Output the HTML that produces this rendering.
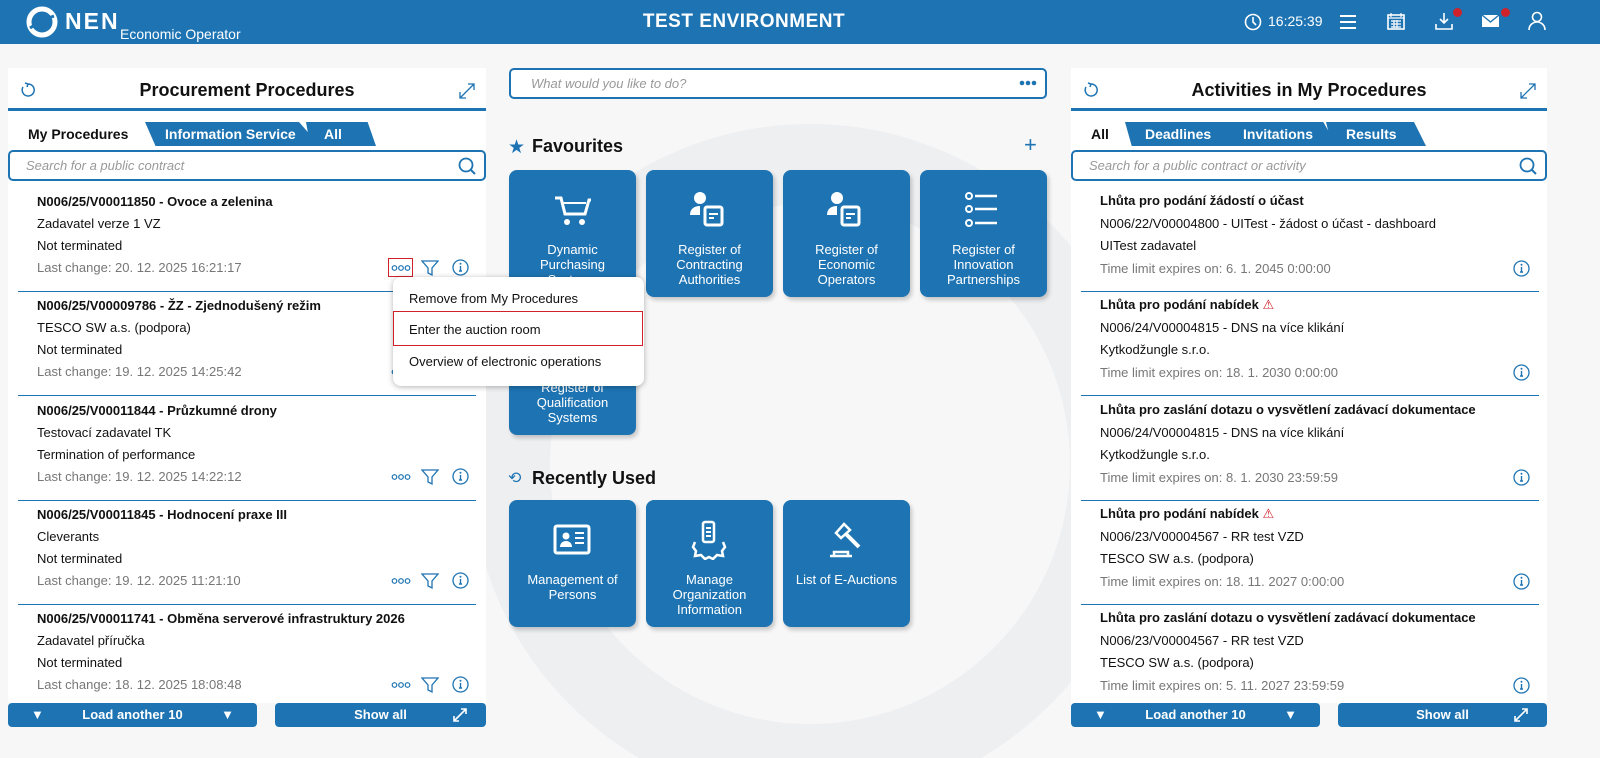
<!DOCTYPE html>
<html><head><meta charset="utf-8">
<style>
*{box-sizing:border-box;margin:0;padding:0}
body{width:1600px;height:758px;overflow:hidden;background:#f7f7f8;font-family:"Liberation Sans",Roboto,sans-serif;position:relative;color:#111}
.hdr{position:absolute;left:0;top:0;width:1600px;height:44px;background:#1e74b3;color:#fff}
.abs{position:absolute}
.panel{position:absolute;top:68px;background:#fff;width:478px;height:635px}
.ptitle{position:absolute;top:12px;left:0;right:0;text-align:center;font-weight:bold;font-size:18px}
.pline{position:absolute;top:40px;left:0;right:0;height:3px;background:#1e74b3}
.tab{position:absolute;top:54px;height:24px;background:#1e74b3;color:#fff;font-weight:bold;font-size:14px;line-height:24px;padding-left:20px;clip-path:polygon(0 0,88% 0,100% 100%,6% 100%)}
.tab.act{background:#fff;color:#111;clip-path:none;padding-left:20px}
.search{position:absolute;top:82px;left:0;right:0;height:31px;border:2px solid #1e74b3;border-radius:5px;font-style:italic;color:#999;font-size:13px;line-height:27px;padding-left:16px}
.item{position:absolute;height:104px;border-bottom:1.5px solid #1e74b3;font-size:13px}
.item div{position:absolute;left:19px}
.b{font-weight:bold}
.g{color:#777}
.btn{position:absolute;top:635px;height:24px;background:#1e74b3;border-radius:4px;color:#fff;font-weight:bold;font-size:13px;line-height:24px;text-align:center}
.tile{position:absolute;width:127px;height:127px;background:#1e74b3;border-radius:8px;color:#fff;font-size:13px;text-align:center;box-shadow:2px 3px 4px rgba(0,0,0,.2)}
.tile .t{position:absolute;left:4px;right:4px;line-height:15px}
.tile svg{position:absolute;left:43px;top:20px}
.menu{position:absolute;left:393px;top:277px;width:251px;height:109px;background:#fff;border-radius:8px;box-shadow:0 1px 6px rgba(0,0,0,.3);font-size:13px}
</style></head><body>
<div class="hdr">
 <svg class="abs" style="left:26px;top:6px" width="32" height="32" viewBox="0 0 32 32"><circle cx="16" cy="16" r="13" fill="none" stroke="#fff" stroke-width="5"/><path d="M4 22 Q16 14 28 10" stroke="#1e74b3" stroke-width="3" fill="none"/></svg>
 <div class="abs" style="left:65px;top:8px;font-size:23px;font-weight:bold;letter-spacing:2px">NEN</div>
 <div class="abs" style="left:120px;top:26px;font-size:14px">Economic Operator</div>
 <div class="abs" style="left:0;width:1488px;text-align:center;top:11px;font-size:19px;font-weight:bold;letter-spacing:.5px">TEST ENVIRONMENT</div>
 <svg class="abs" style="left:1244px;top:13px" width="18" height="18" viewBox="0 0 18 18"><circle cx="9" cy="9" r="7.5" fill="none" stroke="#fff" stroke-width="1.6"/><path d="M9 4v5l3 3" stroke="#fff" stroke-width="1.6" fill="none"/></svg>
 <div class="abs" style="left:1268px;top:13px;font-size:14px">16:25:39</div>
 <svg class="abs" style="left:1339px;top:13px" width="18" height="18"><path d="M1 3h16M1 9h16M1 15h16" stroke="#fff" stroke-width="2"/></svg>
 <svg class="abs" style="left:1387px;top:12px" width="18" height="18"><rect x="1" y="3" width="16" height="14" fill="none" stroke="#fff" stroke-width="1.6"/><path d="M1 6h16M4 1v4M14 1v4M4 9h10M4 12h10M4 15h10M7 8v8M10 8v8" stroke="#fff" stroke-width="1.2"/></svg>
 <svg class="abs" style="left:1434px;top:12px" width="20" height="20"><path d="M10 1v10M6 7l4 4 4-4M2 12v5h16v-5" stroke="#fff" stroke-width="1.6" fill="none"/></svg>
 <div class="abs" style="left:1453px;top:8px;width:9px;height:9px;border-radius:50%;background:#d0222a"></div>
 <svg class="abs" style="left:1481px;top:13px" width="19" height="16"><rect x="1" y="2" width="17" height="12" fill="#fff"/><path d="M1 2l8.5 7 8.5-7" stroke="#1e74b3" stroke-width="1.4" fill="none"/></svg>
 <div class="abs" style="left:1501px;top:8px;width:9px;height:9px;border-radius:50%;background:#d0222a"></div>
 <svg class="abs" style="left:1528px;top:11px" width="18" height="20"><circle cx="9" cy="6" r="4.5" fill="none" stroke="#fff" stroke-width="1.6"/><path d="M1 19c0-5 4-8 8-8s8 3 8 8" fill="none" stroke="#fff" stroke-width="1.6"/></svg>
</div>
<svg class="abs" style="left:480px;top:44px" width="600" height="714"><circle cx="330" cy="420" r="300" fill="none" stroke="#eeeff1" stroke-width="80"/></svg>

<div class="panel" style="left:8px">
 <svg class="abs" style="left:12px;top:14px" width="16" height="16"><path d="M8 2a6 6 0 1 1-5 3M8 2l-3-1M8 2l-1 3" stroke="#1e74b3" stroke-width="1.5" fill="none"/></svg>
 <div class="ptitle">Procurement Procedures</div>
 <svg class="abs" style="left:450px;top:14px" width="18" height="18"><path d="M2 16L16 2M10 2h6v6M2 10v6h6" stroke="#1e74b3" stroke-width="1.3" fill="none"/></svg>
 <div class="pline"></div>
 <div class="tab act" style="left:0;width:140px">My Procedures</div>
 <div class="tab" style="left:137px;width:175px">Information Service</div>
 <div class="tab" style="left:298px;width:70px;padding-left:18px">All</div>
 <div class="search">Search for a public contract
  <svg class="abs" style="right:8px;top:5px" width="18" height="18"><circle cx="8" cy="8" r="6.5" fill="none" stroke="#1e74b3" stroke-width="1.8"/><path d="M12.5 12.5l4.5 4.5" stroke="#1e74b3" stroke-width="2"/></svg></div>
</div>
<div id="litems"></div>
<div class="abs" style="left:388px;top:258px;width:25px;height:19px;border:1px solid #d0222a"></div>
<div class="btn" style="left:8px;width:249px;top:703px">▼ <span style="display:inline-block;width:170px">Load another 10</span> ▼</div>
<div class="btn" style="left:275px;width:211px;top:703px">Show all<svg class="abs" style="right:18px;top:4px" width="16" height="16"><path d="M2 14L14 2M9 2h5v5M2 9v5h5" stroke="#fff" stroke-width="1.6" fill="none"/></svg></div>

<div class="panel" style="left:1071px;width:476px">
 <svg class="abs" style="left:12px;top:14px" width="16" height="16"><path d="M8 2a6 6 0 1 1-5 3M8 2l-3-1M8 2l-1 3" stroke="#1e74b3" stroke-width="1.5" fill="none"/></svg>
 <div class="ptitle">Activities in My Procedures</div>
 <svg class="abs" style="left:448px;top:14px" width="18" height="18"><path d="M2 16L16 2M10 2h6v6M2 10v6h6" stroke="#1e74b3" stroke-width="1.3" fill="none"/></svg>
 <div class="pline"></div>
 <div class="tab act" style="left:0;width:60px">All</div>
 <div class="tab" style="left:54px;width:112px">Deadlines</div>
 <div class="tab" style="left:152px;width:114px">Invitations</div>
 <div class="tab" style="left:255px;width:100px">Results</div>
 <div class="search">Search for a public contract or activity
  <svg class="abs" style="right:8px;top:5px" width="18" height="18"><circle cx="8" cy="8" r="6.5" fill="none" stroke="#1e74b3" stroke-width="1.8"/><path d="M12.5 12.5l4.5 4.5" stroke="#1e74b3" stroke-width="2"/></svg></div>
</div>
<div id="ritems"></div>
<div class="btn" style="left:1071px;width:249px;top:703px">▼ <span style="display:inline-block;width:170px">Load another 10</span> ▼</div>
<div class="btn" style="left:1338px;width:209px;top:703px">Show all<svg class="abs" style="right:18px;top:4px" width="16" height="16"><path d="M2 14L14 2M9 2h5v5M2 9v5h5" stroke="#fff" stroke-width="1.6" fill="none"/></svg></div>

<div class="abs" style="left:509px;top:68px;width:538px;height:31px;border:2px solid #1e74b3;border-radius:5px;background:#fff;font-style:italic;color:#999;font-size:13px;line-height:27px;padding-left:20px">What would you like to do?<svg style="position:absolute;right:8px;top:10px" width="18" height="6"><circle cx="3" cy="3" r="2.3" fill="#1e74b3"/><circle cx="9" cy="3" r="2.3" fill="#1e74b3"/><circle cx="15" cy="3" r="2.3" fill="#1e74b3"/></svg></div>
<div class="abs" style="left:508px;top:136px;color:#1e74b3;font-size:19px">★</div>
<div class="abs" style="left:532px;top:136px;font-size:18px;font-weight:bold">Favourites</div>
<div class="abs" style="left:1024px;top:132px;color:#1e74b3;font-size:22px">+</div>

<div class="tile" style="left:509px;top:170px"><svg width="40" height="40" viewBox="0 0 40 40"><path d="M3 8h6l4 16h20l4-14h2" stroke="#fff" stroke-width="3" fill="none"/><path d="M10 13h24" stroke="#fff" stroke-width="2"/><circle cx="15" cy="32" r="3" fill="#fff"/><circle cx="30" cy="32" r="3" fill="#fff"/></svg><div class="t" style="top:72px">Dynamic<br>Purchasing<br>Systems</div></div>
<div class="tile" style="left:646px;top:170px"><svg width="40" height="40" viewBox="0 0 40 40"><circle cx="11" cy="8" r="6" fill="#fff"/><path d="M1 25c0-6 4-9 10-9v9z" fill="#fff"/><rect x="16" y="17" width="17" height="18" rx="2" fill="none" stroke="#fff" stroke-width="3"/><path d="M20 24h9M20 28h5" stroke="#fff" stroke-width="2"/></svg><div class="t" style="top:72px">Register of<br>Contracting<br>Authorities</div></div>
<div class="tile" style="left:783px;top:170px"><svg width="40" height="40" viewBox="0 0 40 40"><circle cx="11" cy="8" r="6" fill="#fff"/><path d="M1 25c0-6 4-9 10-9v9z" fill="#fff"/><rect x="16" y="17" width="17" height="18" rx="2" fill="none" stroke="#fff" stroke-width="3"/><path d="M20 24h9M20 28h5" stroke="#fff" stroke-width="2"/></svg><div class="t" style="top:72px">Register of<br>Economic<br>Operators</div></div>
<div class="tile" style="left:920px;top:170px"><svg width="40" height="40" viewBox="0 0 40 40"><circle cx="6" cy="6" r="3" fill="none" stroke="#fff" stroke-width="2"/><circle cx="6" cy="19" r="3" fill="none" stroke="#fff" stroke-width="2"/><circle cx="6" cy="33" r="3" fill="none" stroke="#fff" stroke-width="2"/><path d="M12 6h22M12 19h22M12 33h22" stroke="#fff" stroke-width="2.5"/></svg><div class="t" style="top:72px">Register of<br>Innovation<br>Partnerships</div></div>
<div class="tile" style="left:509px;top:308px"><div class="t" style="top:72px">Register of<br>Qualification<br>Systems</div></div>

<div class="abs" style="left:508px;top:468px;color:#1e74b3;font-size:16px">⟲</div>
<div class="abs" style="left:532px;top:468px;font-size:18px;font-weight:bold">Recently Used</div>
<div class="tile" style="left:509px;top:500px"><svg width="40" height="40" viewBox="0 0 40 40"><rect x="3" y="6" width="34" height="27" rx="2" fill="none" stroke="#fff" stroke-width="3"/><circle cx="14" cy="16" r="3.5" fill="#fff"/><path d="M8 27c0-4 3-6 6-6s6 2 6 6z" fill="#fff"/><path d="M23 13h9M23 18h9M23 23h9" stroke="#fff" stroke-width="2"/></svg><div class="t" style="top:72px">Management of<br>Persons</div></div>
<div class="tile" style="left:646px;top:500px"><svg width="40" height="40" viewBox="0 0 40 40"><rect x="14" y="2" width="11" height="20" rx="2" fill="none" stroke="#fff" stroke-width="2.5"/><path d="M17 8h5M17 12h5M17 16h5" stroke="#fff" stroke-width="2"/><path d="M6 22l-2 5 3 4-1 5 6-1 4 4 4-2 4 2 4-4 6 1-1-5 3-4-2-5" fill="none" stroke="#fff" stroke-width="2.5"/></svg><div class="t" style="top:72px">Manage<br>Organization<br>Information</div></div>
<div class="tile" style="left:783px;top:500px"><svg width="40" height="40" viewBox="0 0 40 40"><path d="M18 4l-8 9 5 5 9-8z" fill="none" stroke="#fff" stroke-width="2.5"/><path d="M19 13l14 14" stroke="#fff" stroke-width="4"/><path d="M4 36h22M8 36v-4h14v4" stroke="#fff" stroke-width="2.5" fill="none"/></svg><div class="t" style="top:72px">List of E-Auctions</div></div>

<div class="menu">
 <div class="abs" style="left:16px;top:14px">Remove from My Procedures</div>
 <div class="abs" style="left:0;top:34px;width:250px;height:35px;border:1px solid #d0222a"></div>
 <div class="abs" style="left:16px;top:45px">Enter the auction room</div>
 <div class="abs" style="left:16px;top:77px">Overview of electronic operations</div>
</div>

<script>
var L=[["N006/25/V00011850 - Ovoce a zelenina","Zadavatel verze 1 VZ","Not terminated","Last change: 20. 12. 2025 16:21:17"],
["N006/25/V00009786 - ŽZ - Zjednodušený režim","TESCO SW a.s. (podpora)","Not terminated","Last change: 19. 12. 2025 14:25:42"],
["N006/25/V00011844 - Průzkumné drony","Testovací zadavatel TK","Termination of performance","Last change: 19. 12. 2025 14:22:12"],
["N006/25/V00011845 - Hodnocení praxe III","Cleverants","Not terminated","Last change: 19. 12. 2025 11:21:10"],
["N006/25/V00011741 - Obměna serverové infrastruktury 2026","Zadavatel příručka","Not terminated","Last change: 18. 12. 2025 18:08:48"]];
var R=[["Lhůta pro podání žádostí o účast","N006/22/V00004800 - UITest - žádost o účast - dashboard","UITest zadavatel","Time limit expires on: 6. 1. 2045 0:00:00",0],
["Lhůta pro podání nabídek","N006/24/V00004815 - DNS na více klikání","Kytkodžungle s.r.o.","Time limit expires on: 18. 1. 2030 0:00:00",1],
["Lhůta pro zaslání dotazu o vysvětlení zadávací dokumentace","N006/24/V00004815 - DNS na více klikání","Kytkodžungle s.r.o.","Time limit expires on: 8. 1. 2030 23:59:59",0],
["Lhůta pro podání nabídek","N006/23/V00004567 - RR test VZD","TESCO SW a.s. (podpora)","Time limit expires on: 18. 11. 2027 0:00:00",1],
["Lhůta pro zaslání dotazu o vysvětlení zadávací dokumentace","N006/23/V00004567 - RR test VZD","TESCO SW a.s. (podpora)","Time limit expires on: 5. 11. 2027 23:59:59",0]];
var info='<svg style="position:absolute;left:0;top:0" width="17" height="17"><circle cx="8.5" cy="8.5" r="7.5" fill="none" stroke="#1e74b3" stroke-width="1.3"/><path d="M8.5 7v5M7 12h3" stroke="#1e74b3" stroke-width="1.4"/><circle cx="8.5" cy="4.8" r="1" fill="#1e74b3"/></svg>';
var dots='<svg style="position:absolute;left:0;top:0" width="20" height="8"><circle cx="3.5" cy="4" r="2.3" fill="none" stroke="#1e74b3" stroke-width="1.2"/><circle cx="10" cy="4" r="2.3" fill="none" stroke="#1e74b3" stroke-width="1.2"/><circle cx="16.5" cy="4" r="2.3" fill="none" stroke="#1e74b3" stroke-width="1.2"/></svg>';
var h='';
L.forEach(function(r,i){var t=188+i*104.3;var last=i==4;
h+='<div class="item" style="left:18px;width:458px;top:'+t+'px;'+(last?'border:none':'')+'"><div class="b" style="top:6px">'+r[0]+'</div><div style="top:28px">'+r[1]+'</div><div style="top:50px">'+r[2]+'</div><div class="g" style="top:72px">'+r[3]+'</div>'+
'<div style="left:373px;top:76px;width:20px;height:8px">'+dots+'</div><svg style="position:absolute;left:403px;top:71px" width="18" height="18"><path d="M1 2h16l-6 7v7l-4-2v-5z" fill="none" stroke="#1e74b3" stroke-width="1.3"/></svg><div style="left:434px;top:71px;width:17px;height:17px">'+info+'</div></div>';});
document.getElementById('litems').innerHTML=h;h='';
R.forEach(function(r,i){var t=188+i*104.3;var last=i==4;
h+='<div class="item" style="left:1081px;width:458px;top:'+t+'px;'+(last?'border:none':'')+'"><div class="b" style="top:5px">'+r[0]+(r[4]?'<span style="color:#d0222a;font-weight:normal"> ⚠</span>':'')+'</div><div style="top:28px">'+r[1]+'</div><div style="top:50px">'+r[2]+'</div><div class="g" style="top:73px">'+r[3]+'</div><div style="left:432px;top:72px;width:17px;height:17px">'+info+'</div></div>';});
document.getElementById('ritems').innerHTML=h;
</script>
</body></html>
